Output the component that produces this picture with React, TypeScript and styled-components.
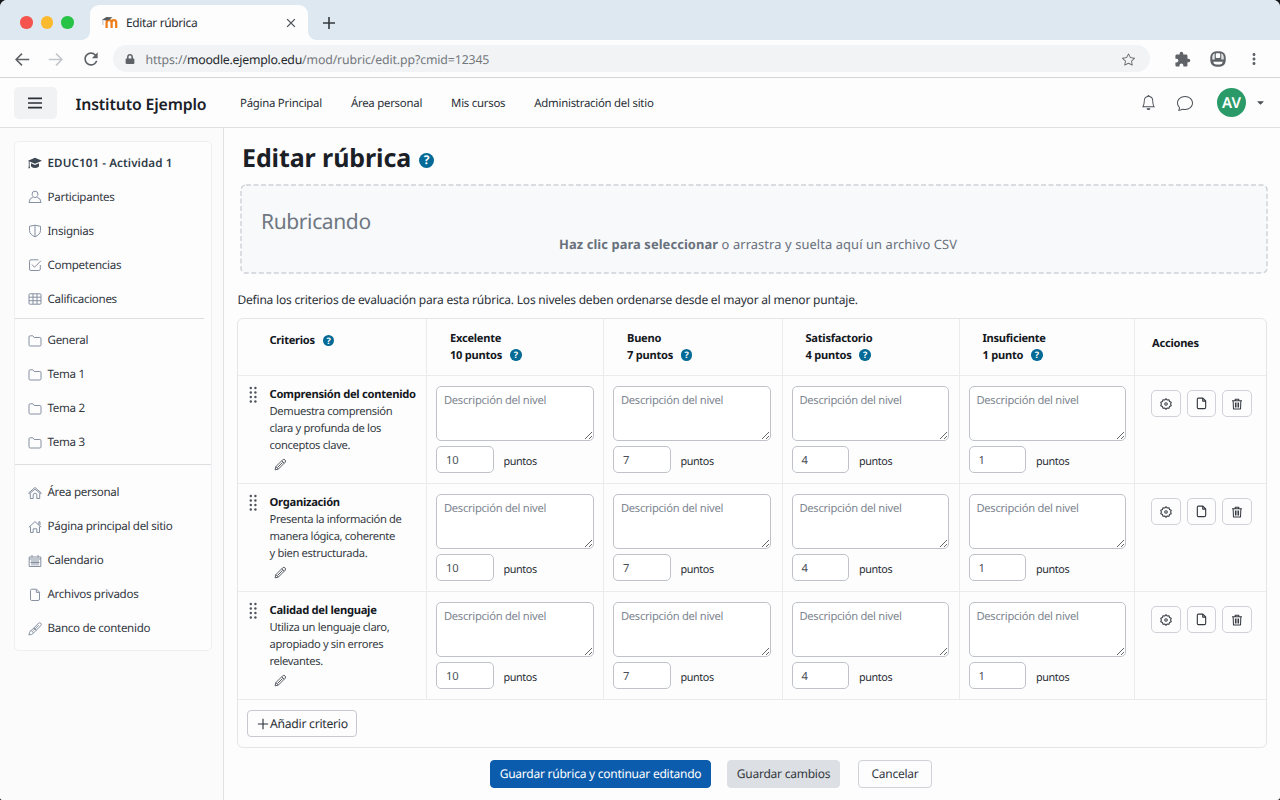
import { useState } from "react";
import styled, { createGlobalStyle } from "styled-components";
import { FaCaretDown, FaLock } from "react-icons/fa";
import { BsBell, BsChat, BsStar } from "react-icons/bs";
import { MdExtension, MdMoreVert, MdRefresh } from "react-icons/md";

interface ITone {
  tone?: string;
}

const GlobalStyle = createGlobalStyle`
  * {
    box-sizing: border-box;
  }

  body {
    margin: 0;
    background: #14171b;
    color: #2b3036;
    font-family: "Noto Sans", "Open Sans", sans-serif;
    font-size: 12px;
    text-rendering: geometricPrecision;
    overflow: hidden;
  }

  svg {
    display: block;
    flex-shrink: 0;
  }

  button,
  input,
  textarea {
    font-family: inherit;
    text-rendering: inherit;
  }
`;

const SWindow = styled.div`
  display: flex;
  flex-direction: column;
  width: 1280px;
  height: 800px;
  border-radius: 7px 7px 3px 3px;
  background: #fdfdfe;
  overflow: hidden;
`;

const STabStrip = styled.div`
  display: flex;
  height: 40px;
  padding: 5px 0 0 20px;
  background: #dde8f1;
`;

const SLights = styled.div`
  display: flex;
  gap: 8px;
  width: 70px;
  padding-top: 11px;
`;

const SLight = styled.span<ITone>`
  width: 12.5px;
  height: 12.5px;
  border-radius: 50%;
  background: ${({ tone }) => tone};
`;

const STab = styled.div`
  display: flex;
  align-items: center;
  position: relative;
  width: 218px;
  height: 35px;
  padding: 0 11px 0 12px;
  border-radius: 9px 9px 0 0;
  background: #fdfdfe;
  color: #2b3036;

  &::before,
  &::after {
    content: "";
    position: absolute;
    bottom: 0;
    width: 8px;
    height: 8px;
  }

  &::before {
    left: -8px;
    background: radial-gradient(circle at 0 0, transparent 7.5px, #fdfdfe 8px);
  }

  &::after {
    right: -8px;
    background: radial-gradient(circle at 100% 0, transparent 7.5px, #fdfdfe 8px);
  }
`;

const STabTitle = styled.span`
  flex: 1;
  margin-left: 8px;
  font-size: 12px;
  letter-spacing: -0.38px;
`;

const SNewTab = styled.div`
  display: flex;
  align-items: center;
  padding-left: 14px;
`;

const SToolbar = styled.div`
  display: flex;
  align-items: center;
  height: 38px;
  padding: 0 17px 0 14.5px;
  border-bottom: 1px solid #d3d5d8;
  background: #fdfdfe;
  color: #5f6368;
`;

const SNavIcons = styled.div`
  display: flex;
  align-items: center;
  gap: 18px;
  width: 98.5px;
  padding-top: 1px;
`;

const SAddress = styled.div`
  display: flex;
  align-items: center;
  width: 1037px;
  height: 27px;
  padding: 1px 15px 0 12px;
  border-radius: 14px;
  background: #f1f3f4;
`;

const SUrl = styled.span`
  flex: 1;
  margin-left: 10.5px;
  color: #74787d;
  font-size: 12.3px;
  letter-spacing: -0.12px;

  b {
    color: #25282c;
    font-weight: 400;
    letter-spacing: -0.24px;
  }
`;

const SToolIcons = styled.div`
  display: flex;
  flex: 1;
  align-items: center;
  justify-content: space-between;
  padding: 1px 0 0 24px;
`;

const SHeader = styled.header`
  display: flex;
  align-items: center;
  height: 50px;
  padding: 0 14px;
  border-bottom: 1px solid #dee0e3;
`;

const SMenuButton = styled.button`
  display: grid;
  place-items: center;
  width: 43px;
  height: 32px;
  padding: 0 1px 0 0;
  border: none;
  border-radius: 5px;
  background: #f1f2f4;
`;

const SBrand = styled.div`
  width: 165px;
  padding: 2px 0 0 18.5px;
  color: #1b2027;
  font-size: 15.8px;
  font-weight: 600;
  letter-spacing: -0.13px;
  white-space: nowrap;
`;

const SNav = styled.nav`
  display: flex;
  flex: 1;
  gap: 29px;
  padding: 1.5px 0 0 18px;
`;

const SNavLink = styled.a`
  font-size: 11.4px;
  letter-spacing: -0.25px;
`;

const SUserMenu = styled.div`
  display: flex;
  align-items: center;
  color: #4b5057;
`;

const SUserIcon = styled.span<{ gap: number }>`
  margin-right: ${({ gap }) => gap}px;
`;

const SAvatar = styled.div`
  display: grid;
  place-items: center;
  width: 29px;
  height: 29px;
  margin-right: 9px;
  border-radius: 50%;
  background: #2a9a68;
  color: white;
  font-size: 15px;
  font-weight: 600;
`;

const SBody = styled.div`
  display: flex;
  flex: 1;
`;

const SSidebar = styled.aside`
  width: 224px;
  padding: 13px 11px 0 14px;
  border-right: 1px solid #dfe1e4;
  background: #fbfbfc;
`;

const SSideCard = styled.div`
  height: 510px;
  padding-top: 4px;
  border: 1px solid #eeeff2;
  border-radius: 5px;
  background: #fdfdfe;
`;

const SSideGroup = styled.div<{ top?: number; bottom?: number }>`
  padding: ${({ top = 0, bottom = 0 }) => `${top}px 0 ${bottom}px`};
`;

const SSideItem = styled.a<{ strong?: boolean }>`
  display: flex;
  align-items: center;
  gap: 6px;
  height: 34px;
  padding-left: 12.5px;
  font-size: 11.6px;
  font-weight: ${({ strong }) => (strong ? 600 : 400)};
  letter-spacing: ${({ strong }) => (strong ? 0.1 : -0.31)}px;
  color: ${({ strong }) => (strong ? "#2f3b47" : "#33383e")};
  white-space: nowrap;

  svg {
    color: ${({ strong }) => (strong ? "#3d4854" : "#8590a0")};
  }
`;

const SSideRule = styled.div<{ inset?: number }>`
  height: 1px;
  margin-right: ${({ inset }) => inset ?? 0}px;
  background: #dcdee2;
`;

const SMain = styled.main`
  flex: 1;
  padding: 13px 12px 0 13px;
`;

const STitleRow = styled.div`
  display: flex;
  align-items: center;
  gap: 8px;
  height: 34px;
  padding-left: 5px;
`;

const STitle = styled.h1`
  margin: 0;
  color: #1b2027;
  font-size: 25px;
  font-weight: 700;
  line-height: 32px;
  letter-spacing: -0.1px;
`;

const SHelp = styled.span<{ large?: boolean }>`
  display: inline-grid;
  place-items: center;
  width: ${({ large }) => (large ? 15 : 11.5)}px;
  height: ${({ large }) => (large ? 15 : 11.5)}px;
  margin-top: ${({ large }) => (large ? 4 : -2)}px;
  border-radius: 50%;
  background: #056a96;
  color: white;
  font-size: ${({ large }) => (large ? 12 : 9)}px;
  font-weight: 700;
  line-height: 1;
  letter-spacing: 0;
`;

const SDropZone = styled.div`
  display: flex;
  flex-direction: column;
  isolation: isolate;
  height: 90px;
  margin: 9px 0 0 3px;
`;

const SDropFrame = styled.svg`
  position: absolute;
  z-index: -1;
`;

const SDropTitle = styled.div`
  height: 36px;
  padding: 18px 0 0 21px;
  color: #6f7782;
  font-size: 21px;
  line-height: 40px;
  letter-spacing: -0.38px;
`;

const SDropHint = styled.div`
  margin-top: 13px;
  padding-left: 8px;
  color: #69717c;
  font-size: 12.9px;
  line-height: 22px;
  letter-spacing: 0.09px;
  text-align: center;

  b {
    font-weight: 700;
  }
`;

const SIntro = styled.p`
  height: 44px;
  margin: 0;
  padding-left: 0.5px;
  font-size: 12px;
  line-height: 51px;
  letter-spacing: -0.215px;
`;

const STable = styled.div`
  height: 430px;
  margin-right: 1px;
  border: 1px solid #e3e5e8;
  border-radius: 6px;
`;

const SRow = styled.div<{ head?: boolean }>`
  display: grid;
  grid-template-columns: 189px 177px 178.5px 177px 175.5px 1fr;
  height: ${({ head }) => (head ? 57 : 108)}px;
  border-bottom: 1px solid #e9ebed;
`;

const SCell = styled.div`
  border-right: 1px solid #e9ebed;
  min-width: 0;

  &:last-child {
    border-right: none;
  }
`;

const SHeadCell = styled(SCell)`
  display: flex;
  flex-direction: column;
  justify-content: center;
  padding: 1px 0 0 23px;
  color: #14181d;
  font-size: 11.1px;
  font-weight: 700;
  line-height: 16.5px;
  letter-spacing: -0.25px;
`;

const SCriteriaHead = styled(SHeadCell)`
  padding: 0 0 11px 31.5px;
`;

const SActionsHead = styled(SHeadCell)`
  padding: 0 0 5px 17px;
`;

const SHeadLine = styled.div`
  display: flex;
  align-items: center;
  gap: 8px;
`;

const SCriterion = styled(SCell)`
  display: flex;
  gap: 13px;
  padding: 10px 0 0 10.5px;
`;

const SCriterionText = styled.div`
  margin-top: -0.5px;
  color: #363b42;
  font-size: 11.2px;
  line-height: 17px;
  letter-spacing: -0.35px;
  white-space: pre-line;

  b {
    display: block;
    color: #14181d;
    font-weight: 700;
    letter-spacing: -0.28px;
    white-space: nowrap;
  }

  svg {
    margin: 4.5px 0 0 4px;
  }
`;

const SLevel = styled(SCell)`
  padding: 10px 0 0 9.4px;
`;

const SDescription = styled.textarea`
  display: block;
  width: 157.5px;
  height: 55px;
  padding: 4.5px 7px 3px 6.5px;
  border: 1px solid #bfc3c9;
  border-radius: 5px;
  outline: none;
  background: white;
  font-size: 11.2px;
  line-height: 18px;
  letter-spacing: -0.28px;

  &::placeholder {
    color: #7d8590;
  }
`;

const SPoints = styled.label`
  display: flex;
  align-items: center;
  gap: 9.5px;
  margin-top: 5px;
  font-size: 10.8px;
  line-height: 17px;
  letter-spacing: -0.38px;
`;

const SPointsText = styled.span`
  padding-top: 4px;
`;

const SPointsInput = styled.input`
  width: 57.5px;
  height: 27px;
  padding: 1px 8.5px 0;
  border: 1px solid #bfc3c9;
  border-radius: 5px;
  outline: none;
  background: white;
  color: #4a4f56;
  font-size: 11.2px;
`;

const SActions = styled(SCell)`
  display: flex;
  gap: 6px;
  padding: 14px 0 0 16px;
`;

const SIconButton = styled.button`
  display: grid;
  place-items: center;
  width: 29.5px;
  height: 27px;
  padding: 0;
  border: 1px solid #cfd2d7;
  border-radius: 5px;
  background: #fdfdfe;
  color: #33383e;
`;

const SAddButton = styled.button`
  display: flex;
  align-items: center;
  gap: 1.5px;
  width: 110px;
  height: 27px;
  margin: 10px 0 0 9px;
  padding: 0 0 0 8.5px;
  border: 1px solid #c6c9ce;
  border-radius: 4px;
  background: #fdfdfe;
  color: #2b3036;
  font-size: 12.2px;
  letter-spacing: -0.27px;
  white-space: nowrap;
`;

const SFooter = styled.div`
  display: flex;
  padding: 11.5px 0 0 253px;
`;

const SButton = styled.button<{ kind: "primary" | "muted" | "plain"; width: number }>`
  width: ${({ width }) => width}px;
  height: 28px;
  margin-right: ${({ kind }) => (kind === "muted" ? 18 : 16)}px;
  padding: 0;
  border: 1px solid
    ${({ kind }) =>
      kind === "primary" ? "#0b5cad" : kind === "muted" ? "#dcdfe3" : "#cfd2d7"};
  border-radius: 4px;
  background: ${({ kind }) =>
    kind === "primary" ? "#0b5cad" : kind === "muted" ? "#dcdfe3" : "#fdfdfe"};
  color: ${({ kind }) => (kind === "primary" ? "white" : "#33383e")};
  font-size: 12px;
  letter-spacing: -0.24px;
  white-space: nowrap;
`;

const paths: Record<string, string> = {
  person:
    "M7 1.2a2.9 2.9 0 0 1 2.9 3c0 1.8-1.3 3.3-2.9 3.3S4.1 6 4.1 4.2A2.9 2.9 0 0 1 7 1.2zM4.8 7.2Q1.2 8.2 1 12.5h12q-.2-4.3-3.8-5.3",
  shield: "M7 1.2 1.5 2.3v4.2c0 3 2.5 5 5.5 6.3 3-1.3 5.5-3.3 5.5-6.3V2.3zM7 1.5v11",
  check:
    "M12.3 7v4a1.5 1.5 0 0 1-1.5 1.5H3A1.5 1.5 0 0 1 1.5 11V3.3A1.5 1.5 0 0 1 3 1.8h7.5M4 6.5l2.5 2.8L12.9 2.8",
  table:
    "M2 1.8h10q1 0 1 1v8.4q0 1-1 1H2q-1 0-1-1V2.8q0-1 1-1zM1 5.2h12M1 8.7h12M5 1.8v10.4M9 1.8v10.4",
  folder:
    "M1 10.8V3Q1 1.8 2.2 1.8h2.6l1.4 1.7h5.6q1.2 0 1.2 1.2v6.1q0 1.2-1.2 1.2H2.2Q1 12 1 10.8z",
  dashboard:
    "M.6 7 7 1.5 13.4 7l-.8.8L7 3.2 1.4 7.8zM2.3 7.5v5h2.9V9a1.8 1.8 0 0 1 3.6 0v3.5h2.9v-5",
  home: "M.8 7.3 7 1.6l6.2 5.7M2.5 6.5v6h2.7V8.8h3.6v3.7h2.7v-6M10.8 4.5V1.8h1.2v3.5",
  calendar:
    "M1.2 3h11.6v9.5H1.2zM1.2 5h11.6M4 1v2.5M10 1v2.5M4 6v5.5M6 6v5.5M8 6v5.5M10 6v5.5M2.5 8.5h9",
  file: "M3.7 1.2h4.8l3 3V11q0 1.5-1.5 1.5H3.7q-1.2 0-1.2-1.3V2.5q0-1.3 1.2-1.3zM8.3 1.4v3h3",
  brush:
    "M12.7 1.2q1.2 1.2-.1 2.6L8.2 8.3 5.8 5.9l4.4-4.3q1.4-1.4 2.5-.4zM5.8 5.9 8.2 8.3 5.6 10.9 3.2 8.5zM3.2 8.5q-1.6.6-1.6 2.200L.8 12.900q3.200.2 4.800-2M10.600 3.200 5 8.800",
  pencil:
    "M1.2 12.8l.8-3.5 7.4-7.4q1.2-1 2.4.1t.3 2.5L4.7 11.9zM8.4 3l2.6 2.5M9.3 4.7l-5.5 5.5M2 9.3l2.7 2.6",
  gear: "M7 .8l1.500 1.600 2.100-.3.500 2.100 2 .8-.7 2 .7 2-2 .8-.5 2.100-2.100-.3L7 13.200l-1.500-1.600-2.100.3-.5-2.100-2-.8.700-2-.7-2 2-.8.500-2.100 2.100.3zM8.500 7a1.500 1.500 0 1 1-3 0 1.500 1.500 0 0 1 3 0z",
  trash:
    "M1.2 3.3h11.6M4.9 3V1.4h4.2V3M2.5 3.5l.4 9.3h8.2l.4-9.3M5.2 5.3v5.7M7 5.3v5.7M8.8 5.3v5.7",
  plus: "M7 1v12M1 7h12",
  close: "M2.5 2.5l9 9M11.5 2.5l-9 9",
  left: "M13.3 7H1.2M6.5 1.5 1 7l5.5 5.5",
  right: "M.7 7h12.1M7.5 1.5 13 7l-5.5 5.5",
  bars: "M0 2.3h14M0 7h14M0 11.7h14",
};

interface IIcon {
  name: string;
  size?: number;
  weight?: number;
  color?: string;
}

const Icon = ({ name, size = 13, weight = 1, color = "currentColor" }: IIcon) => (
  <svg
    width={size}
    height={size}
    viewBox="0 0 14 14"
    fill="none"
    stroke={color}
    strokeWidth={weight}
    strokeLinejoin="round"
  >
    <path d={paths[name]} />
  </svg>
);

const CapIcon = () => (
  <svg width="14" height="13" viewBox="0 0 14 13" fill="currentColor">
    <path d="M7 .8 14 3.8 7 6.8 1.6 4.6V9l.5 2.2H.4L.8 9V4.2L0 3.8z" />
    <path d="M3 6.2 7 7.9l4-1.7v3.2Q7 12.6 3 9.4z" />
  </svg>
);

const MoodleLogo = () => (
  <svg width="16" height="13" viewBox="0 0 16 13" fill="none">
    <path
      d="M4.6 12V6.8q0-2.6 2.5-2.6t2.5 2.6V12M9.6 12V6.8q0-2.6 2.3-2.6t2.3 2.6V12"
      stroke="#ee7f1c"
      strokeWidth="2.3"
    />
    <path d="M0 3.8 4.5 1l6 .3L7 4l-3 .5z" fill="#565b60" />
    <path d="M.9 4v5" stroke="#8d9195" strokeWidth=".6" />
  </svg>
);

const ProfileIcon = () => (
  <svg width="16" height="16" viewBox="0 0 16 16">
    <rect x=".3" y=".3" width="15.4" height="15.4" rx="6" fill="#5f6368" />
    <path
      d="M2.3 8.5V5.5Q2.5 3 4.7 2.3V8.5zM11.3 8.5V2.3q2.2.7 2.4 3.2v3z"
      fill="#e3e4e6"
    />
    <rect x="5.8" y="2.3" width="4.4" height="4.7" rx=".8" fill="#fdfdfe" />
    <path d="M3.2 10.8h9.6q-.3 2.4-2.8 2.8H6q-2.5-.4-2.8-2.8z" fill="#fdfdfe" />
  </svg>
);

const DragHandle = () => (
  <svg width="8" height="17" viewBox="0 0 8 17" fill="#4e545c">
    {[2, 6.5, 11, 15.5].map((y) => (
      <g key={y}>
        <circle cx="1.8" cy={y} r="1.2" />
        <circle cx="6.4" cy={y} r="1.2" />
      </g>
    ))}
  </svg>
);

const levels = [
  { name: "Excelente", points: 10, label: "10 puntos" },
  { name: "Bueno", points: 7, label: "7 puntos" },
  { name: "Satisfactorio", points: 4, label: "4 puntos" },
  { name: "Insuficiente", points: 1, label: "1 punto" },
];

const initialCriteria = [
  {
    title: "Comprensión del contenido",
    text: "Demuestra comprensión\nclara y profunda de los\nconceptos clave.",
  },
  {
    title: "Organización",
    text: "Presenta la información de\nmanera lógica, coherente\ny bien estructurada.",
  },
  {
    title: "Calidad del lenguaje",
    text: "Utiliza un lenguaje claro,\napropiado y sin errores\nrelevantes.",
  },
];

const courseLinks = [
  { icon: "person", label: "Participantes" },
  { icon: "shield", label: "Insignias" },
  { icon: "check", label: "Competencias" },
  { icon: "table", label: "Calificaciones" },
];

const sections = ["General", "Tema 1", "Tema 2", "Tema 3"];

const siteLinks = [
  { icon: "dashboard", label: "Área personal" },
  { icon: "home", label: "Página principal del sitio" },
  { icon: "calendar", label: "Calendario" },
  { icon: "file", label: "Archivos privados" },
  { icon: "brush", label: "Banco de contenido" },
];

const Browser = () => (
  <>
    <STabStrip>
      <SLights>
        <SLight tone="#f4544d" />
        <SLight tone="#fbb92e" />
        <SLight tone="#27c346" />
      </SLights>
      <STab>
        <MoodleLogo />
        <STabTitle>Editar rúbrica</STabTitle>
        <Icon name="close" size={12} weight={1.5} color="#4b5057" />
      </STab>
      <SNewTab>
        <Icon name="plus" size={14} weight={1.6} color="#33383e" />
      </SNewTab>
    </STabStrip>
    <SToolbar>
      <SNavIcons>
        <Icon name="left" size={15} weight={1.5} />
        <Icon name="right" size={15} weight={1.5} color="#c3c6ca" />
        <MdRefresh size={20} />
      </SNavIcons>
      <SAddress>
        <FaLock size={10} />
        <SUrl>
          https://<b>moodle.ejemplo.edu</b>/mod/rubric/edit.pp?cmid=12345
        </SUrl>
        <BsStar size={13} />
      </SAddress>
      <SToolIcons>
        <MdExtension size={17} />
        <ProfileIcon />
        <MdMoreVert size={18} />
      </SToolIcons>
    </SToolbar>
  </>
);

const Sidebar = () => (
  <SSidebar>
    <SSideCard>
      <SSideGroup bottom={2}>
        <SSideItem strong>
          <CapIcon />
          EDUC101 - Actividad 1
        </SSideItem>
        {courseLinks.map(({ icon, label }) => (
          <SSideItem key={icon}>
            <Icon name={icon} size={14} />
            {label}
          </SSideItem>
        ))}
      </SSideGroup>
      <SSideRule inset={7} />
      <SSideGroup top={4.5} bottom={4.5}>
        {sections.map((section) => (
          <SSideItem key={section}>
            <Icon name="folder" size={14} />
            {section}
          </SSideItem>
        ))}
      </SSideGroup>
      <SSideRule />
      <SSideGroup top={10.5}>
        {siteLinks.map(({ icon, label }) => (
          <SSideItem key={icon}>
            <Icon name={icon} size={14} />
            {label}
          </SSideItem>
        ))}
      </SSideGroup>
    </SSideCard>
  </SSidebar>
);

const App = () => {
  const [criteria, setCriteria] = useState(initialCriteria);

  const removeCriterion = (index: number) =>
    setCriteria(criteria.filter((_, i) => i !== index));

  return (
    <>
      <GlobalStyle />
      <SWindow>
        <Browser />
        <SHeader>
          <SMenuButton>
            <Icon name="bars" size={14} weight={1.7} color="#2b3036" />
          </SMenuButton>
          <SBrand>Instituto Ejemplo</SBrand>
          <SNav>
            <SNavLink>Página Principal</SNavLink>
            <SNavLink>Área personal</SNavLink>
            <SNavLink>Mis cursos</SNavLink>
            <SNavLink>Administración del sitio</SNavLink>
          </SNav>
          <SUserMenu>
            <SUserIcon gap={21}>
              <BsBell size={15} />
            </SUserIcon>
            <SUserIcon gap={24.5}>
              <BsChat size={16} />
            </SUserIcon>
            <SAvatar>AV</SAvatar>
            <FaCaretDown size={11} />
          </SUserMenu>
        </SHeader>
        <SBody>
          <Sidebar />
          <SMain>
            <STitleRow>
              <STitle>Editar rúbrica</STitle>
              <SHelp large>?</SHelp>
            </STitleRow>
            <SDropZone>
              <SDropFrame width="1028" height="90">
                <rect
                  x="1"
                  y="1"
                  width="1026"
                  height="88"
                  rx="5"
                  fill="#f8f9fb"
                  stroke="#cdd1d7"
                  strokeWidth="1.4"
                  strokeDasharray="5 2.5"
                />
              </SDropFrame>
              <SDropTitle>Rubricando</SDropTitle>
              <SDropHint>
                <b>Haz clic para seleccionar</b> o arrastra y suelta aquí un archivo CSV
              </SDropHint>
            </SDropZone>
            <SIntro>
              Defina los criterios de evaluación para esta rúbrica. Los niveles deben
              ordenarse desde el mayor al menor puntaje.
            </SIntro>
            <STable>
              <SRow head>
                <SCriteriaHead>
                  <SHeadLine>
                    Criterios <SHelp>?</SHelp>
                  </SHeadLine>
                </SCriteriaHead>
                {levels.map(({ name, label }) => (
                  <SHeadCell key={name}>
                    {name}
                    <SHeadLine>
                      {label} <SHelp>?</SHelp>
                    </SHeadLine>
                  </SHeadCell>
                ))}
                <SActionsHead>Acciones</SActionsHead>
              </SRow>
              {criteria.map(({ title, text }, i) => (
                <SRow key={title}>
                  <SCriterion>
                    <DragHandle />
                    <SCriterionText>
                      <b>{title}</b>
                      {text}
                      <Icon name="pencil" size={13} color="#4b5057" />
                    </SCriterionText>
                  </SCriterion>
                  {levels.map(({ name, points }) => (
                    <SLevel key={name}>
                      <SDescription placeholder="Descripción del nivel" />
                      <SPoints>
                        <SPointsInput defaultValue={points} />
                        <SPointsText>puntos</SPointsText>
                      </SPoints>
                    </SLevel>
                  ))}
                  <SActions>
                    <SIconButton>
                      <Icon name="gear" size={12} weight={1.2} />
                    </SIconButton>
                    <SIconButton>
                      <Icon name="file" size={13} weight={1.2} />
                    </SIconButton>
                    <SIconButton onClick={() => removeCriterion(i)}>
                      <Icon name="trash" size={12} weight={1.2} />
                    </SIconButton>
                  </SActions>
                </SRow>
              ))}
              <SAddButton>
                <Icon name="plus" size={12} weight={1.3} />
                Añadir criterio
              </SAddButton>
            </STable>
            <SFooter>
              <SButton kind="primary" width={221}>
                Guardar rúbrica y continuar editando
              </SButton>
              <SButton kind="muted" width={113}>
                Guardar cambios
              </SButton>
              <SButton kind="plain" width={74}>
                Cancelar
              </SButton>
            </SFooter>
          </SMain>
        </SBody>
      </SWindow>
    </>
  );
};

export default App;
